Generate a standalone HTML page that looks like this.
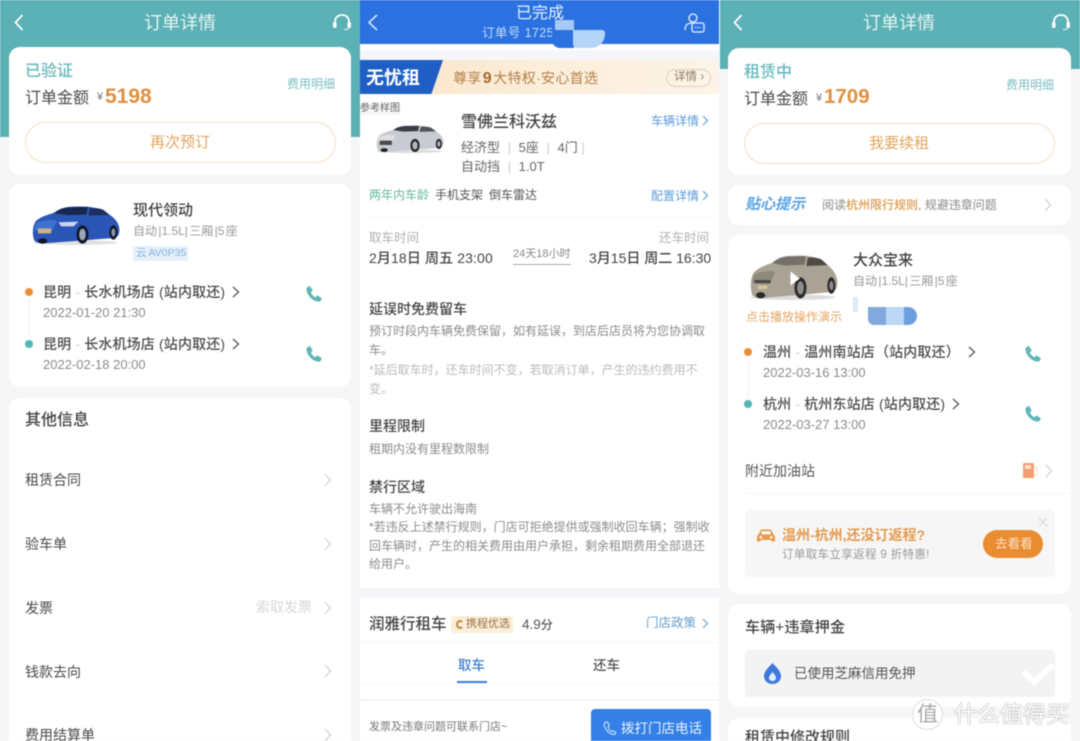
<!DOCTYPE html>
<html lang="zh"><head><meta charset="utf-8"><title>订单详情</title>
<style>
*{box-sizing:border-box;margin:0;padding:0}
html,body{width:1080px;height:741px;overflow:hidden;background:#f6f6f6}
body{position:relative;font-family:"Liberation Sans","Noto Sans CJK SC",sans-serif;color:#444}
#b{position:absolute;left:0;top:0;width:1080px;height:741px;filter:blur(.4px);overflow:hidden}
.a{position:absolute}
.t{position:absolute;white-space:nowrap;line-height:1}
.c{position:absolute;background:#fff;border-radius:11px}
.m{font-weight:500}
svg{position:absolute;overflow:visible}
.chev{fill:none;stroke:#d5d5d5;stroke-width:1.3}
.tl{color:#7dbdc2}
.or{color:#e08f3e}
.g{color:#8c8c8c}
.sp{word-spacing:-2px}
</style></head><body><div id="b">
<svg width="0" height="0" style="position:absolute"><defs>
<g id="ph"><path d="M1.5 3 L4.8 .8 L7.8 5.5 L5.9 7.5 C6.6 9.5 8.2 11.2 10.5 12.2 L12.5 10.4 L17 13.4 L15 16.6 C8 17.2 1 10 1.5 3Z" fill="#5fb6b8"/></g>
<g id="hs"><path d="M2 12 V9 C2 4.5 5 2 9 2 C13 2 16 4.5 16 9 V12" fill="none" stroke="#fff" stroke-width="1.8"/><rect x="0" y="9" width="3.5" height="6" rx="1.5" fill="#fff"/><rect x="14.5" y="9" width="3.5" height="6" rx="1.5" fill="#fff"/><path d="M16 15 C15 16.5 13 16.5 11 16.5" fill="none" stroke="#fff" stroke-width="1"/></g>
</defs></svg>

<!-- PANEL 1 -->
<div class="a" style="left:0;top:0;width:360px;height:741px;background:#f6f6f6"></div>
<div class="a" style="left:0;top:0;width:360px;height:137px;background:#5bb1b5"></div>
<svg style="left:14px;top:14px" width="10" height="17"><path d="M8.5 1 L1.5 8.5 L8.5 16" fill="none" stroke="#fff" stroke-width="1.7"/></svg>
<div class="t" style="left:144px;top:14px;font-size:18px;color:#e6f4f4">订单详情</div>
<svg style="left:333px;top:13px" width="18" height="18"><use href="#hs"/></svg>
<div class="c" style="left:9px;top:47px;width:342px;height:128px"></div>
<div class="t m" style="left:25px;top:64px;font-size:16px;color:#66b9bc">已验证</div>
<div class="t" style="left:25px;top:91px;font-size:16px;color:#4a4a4a">订单金额</div>
<div class="t" style="left:97px;top:92px;font-size:11px;color:#777">¥</div>
<div class="t" style="left:105px;top:86px;font-size:21px;font-weight:700;color:#e08f3e">5198</div>
<div class="t tl" style="left:287px;top:78px;font-size:12px">费用明细</div>
<div class="a" style="left:25px;top:122px;width:311px;height:41px;border:1px solid #f1dfc4;border-radius:21px"></div>
<div class="t" style="left:150px;top:135px;font-size:15px;color:#e2a45c">再次预订</div>

<div class="c" style="left:9px;top:184px;width:342px;height:203px"></div>
<svg style="left:32px;top:206px" width="88" height="39" viewBox="0 0 265 115" preserveAspectRatio="none"><ellipse cx="130" cy="108" rx="128" ry="7" fill="#e2e2e2"/><path d="M6 100 C0 80 2 58 12 44 C30 30 48 26 66 20 C80 10 98 2 125 2 C165 0 200 2 222 20 C245 30 262 48 263 68 C264 84 258 92 250 94 L175 100 L40 110 C20 110 10 108 6 100Z" fill="#2a55b5"/><path d="M68 21 C82 8 100 4 122 4 L168 3 L164 25 L108 27Z" fill="#16264f"/><path d="M174 7 C192 5 206 7 216 12 L234 26 L170 28Z" fill="#1c2f5e"/><path d="M12 50 C40 40 62 38 76 44 L60 74 L6 72Z" fill="#3b72cf"/><path d="M80 48 L140 46 L125 60 L88 60Z" fill="#c9d6ee"/><rect x="18" y="66" width="40" height="15" fill="#c9b18a"/><ellipse cx="152" cy="84" rx="18" ry="27" fill="#11172a"/><ellipse cx="152" cy="84" rx="10" ry="17" fill="#9aa5b8"/><ellipse cx="245" cy="78" rx="12" ry="21" fill="#11172a"/><ellipse cx="245" cy="78" rx="6" ry="12" fill="#8b96a8"/><ellipse cx="32" cy="103" rx="14" ry="8" fill="#11172a"/></svg>
<div class="t m" style="left:133px;top:203px;font-size:15px;color:#3f3f3f">现代领动</div>
<div class="t sp" style="left:133px;top:225px;font-size:12px;color:#999">自动 |1.5L| 三厢 |5 座</div>
<div class="a" style="left:133px;top:246px;width:55px;height:15px;background:#e6f0fb"></div>
<div class="t" style="left:136px;top:248px;font-size:10.5px;color:#85b1dc;word-spacing:-1px">云 AV0P35</div>
<div class="a" style="left:25px;top:288px;width:8px;height:8px;border-radius:50%;background:#ea8d34"></div>
<div class="a" style="left:29px;top:298px;width:1px;height:40px;background:#eee"></div>
<div class="a" style="left:25px;top:340px;width:8px;height:8px;border-radius:50%;background:#55b4b6"></div>
<div class="t m" style="left:43px;top:285px;font-size:14px;color:#4a4a4a;letter-spacing:.15px">昆明 <span style="color:#ccc">-</span> 长水机场店 (站内取还)</div>
<div class="t g" style="left:43px;top:306px;font-size:13px">2022-01-20 21:30</div>
<svg style="left:232px;top:286px" width="8" height="12"><path d="M1 1 L6.5 6 L1 11" fill="none" stroke="#555" stroke-width="1.3"/></svg>
<div class="t m" style="left:43px;top:337px;font-size:14px;color:#4a4a4a;letter-spacing:.15px">昆明 <span style="color:#ccc">-</span> 长水机场店 (站内取还)</div>
<div class="t g" style="left:43px;top:358px;font-size:13px">2022-02-18 20:00</div>
<svg style="left:232px;top:338px" width="8" height="12"><path d="M1 1 L6.5 6 L1 11" fill="none" stroke="#555" stroke-width="1.3"/></svg>
<svg style="left:305px;top:285px" width="18" height="18"><use href="#ph"/></svg>
<svg style="left:305px;top:345px" width="18" height="18"><use href="#ph"/></svg>

<div class="c" style="left:9px;top:398px;width:342px;height:360px"></div>
<div class="t m" style="left:25px;top:413px;font-size:16px;color:#444">其他信息</div>
<div class="t" style="left:25px;top:473px;font-size:14px;color:#4a4a4a">租赁合同</div>
<div class="t" style="left:25px;top:537px;font-size:14px;color:#4a4a4a">验车单</div>
<div class="t" style="left:25px;top:601px;font-size:14px;color:#4a4a4a">发票</div>
<div class="t" style="left:25px;top:665px;font-size:14px;color:#4a4a4a">钱款去向</div>
<div class="t" style="left:25px;top:728px;font-size:14px;color:#4a4a4a">费用结算单</div>
<div class="t" style="left:256px;top:600px;font-size:14px;color:#d8d8d8">索取发票</div>
<svg style="left:324px;top:474px" width="8" height="270"><path class="chev" d="M1 0 L6.5 6 L1 12 M1 64 L6.5 70 L1 76 M1 128 L6.5 134 L1 140 M1 191 L6.5 197 L1 203 M1 255 L6.5 261 L1 267"/></svg>

<!-- PANEL 2 -->
<div class="a" style="left:360px;top:0;width:360px;height:741px;background:#fff"></div>
<div class="a" style="left:360px;top:0;width:360px;height:44px;background:#2b72e0"></div>
<div class="a" style="left:360px;top:50px;width:360px;height:10px;background:#f5f6f9"></div>
<svg style="left:367px;top:14px" width="12" height="18"><path d="M10 1 L2 8.5 L10 16" fill="none" stroke="#e8f0fc" stroke-width="1.5"/></svg>
<div class="t" style="left:516px;top:6px;font-size:16px;color:#e8f1fd">已完成</div>
<div class="t" style="left:482px;top:27px;font-size:12.5px;color:#c5daf7;letter-spacing:.4px">订单号 1725</div>
<div class="a" style="left:552px;top:22px;width:22px;height:26px;background:#2b72e0;border-radius:0 0 0 8px"></div>
<div class="a" style="left:573px;top:30px;width:32px;height:18px;background:#b5d5f8;border-radius:0 3px 14px 4px"></div>
<div class="a" style="left:555px;top:20px;width:19px;height:10px;background:#a7c9f4"></div>
<svg style="left:684px;top:12px" width="21" height="21"><circle cx="9" cy="6" r="4" fill="none" stroke="#e8f0fc" stroke-width="1.3"/><path d="M1 18 C1 13 4 11 8 11" fill="none" stroke="#e8f0fc" stroke-width="1.3"/><rect x="8" y="11" width="12" height="9" rx="2" fill="none" stroke="#e8f0fc" stroke-width="1.3"/><path d="M11 15.5 H17" stroke="#e8f0fc" stroke-dasharray="1.5 1"/></svg>

<div class="a" style="left:360px;top:60px;width:360px;height:34px;background:linear-gradient(90deg,#f9e3c6,#fbeeda 50%,#fdf4e8)"></div>
<div class="a" style="left:360px;top:60px;width:83px;height:34px;background:#1f5ec4;clip-path:polygon(0 0,100% 0,86% 100%,0 100%)"></div>
<div class="t" style="left:366px;top:69px;font-size:18px;font-weight:700;color:#fff">无忧租</div>
<div class="t" style="left:453px;top:71px;font-size:14px;color:#b5814a;word-spacing:-3px;letter-spacing:.3px">尊享 <b style="font-size:16px;color:#a36a2c">9</b> 大特权·安心首选</div>
<div class="a" style="left:666px;top:69px;width:45px;height:18px;border:1px solid #ddd0bb;border-radius:9px"></div>
<div class="t" style="left:674px;top:72px;font-size:11.5px;color:#8b7760">详情 ›</div>

<div class="a" style="left:360px;top:105px;width:41px;height:10px;background:#f6f6f6"></div>
<div class="t" style="left:360px;top:104px;font-size:10px;color:#666">参考样图</div>
<svg style="left:376px;top:125px" width="68" height="28" viewBox="0 0 265 115" preserveAspectRatio="none"><ellipse cx="130" cy="108" rx="128" ry="7" fill="#ddd"/><path d="M6 100 C0 80 2 58 12 44 C30 30 48 26 66 20 C80 10 98 2 125 2 C165 0 200 2 222 20 C245 30 262 48 263 68 C264 84 258 92 250 94 L175 100 L40 110 C20 110 10 108 6 100Z" fill="#c9cbd2"/><path d="M68 21 C82 8 100 4 122 4 L168 3 L164 25 L108 27Z" fill="#3a3d45"/><path d="M174 7 C192 5 206 7 216 12 L234 26 L170 28Z" fill="#52555e"/><path d="M12 50 C40 40 62 38 76 44 L60 74 L6 72Z" fill="#dfe0e5"/><rect x="14" y="64" width="48" height="18" fill="#4a4c52"/><ellipse cx="152" cy="84" rx="18" ry="27" fill="#222328"/><ellipse cx="152" cy="84" rx="10" ry="17" fill="#b5b7bd"/><ellipse cx="245" cy="78" rx="12" ry="21" fill="#222328"/><ellipse cx="245" cy="78" rx="6" ry="12" fill="#b5b7bd"/><ellipse cx="32" cy="103" rx="14" ry="8" fill="#222328"/></svg>
<div class="t m" style="left:461px;top:115px;font-size:16px;color:#444">雪佛兰科沃兹</div>
<div class="t" style="left:651px;top:115px;font-size:12px;color:#5a9ad8">车辆详情</div>
<svg style="left:702px;top:115px" width="7" height="11"><path d="M1 1 L5.5 5.5 L1 10" fill="none" stroke="#5a9ad8" stroke-width="1.1"/></svg>
<div class="t" style="left:461px;top:141px;font-size:13px;color:#666">经济型 <span style="color:#ccc;margin:0 4px">|</span> 5座 <span style="color:#ccc;margin:0 4px">|</span> 4门 <span style="color:#ccc">|</span></div>
<div class="t" style="left:461px;top:160px;font-size:13px;color:#666">自动挡 <span style="color:#ccc;margin:0 4px">|</span> 1.0T</div>
<div class="t" style="left:369px;top:189px;font-size:12px;color:#62bb98">两年内车龄</div>
<div class="t" style="left:435px;top:189px;font-size:12px;color:#555">手机支架</div>
<div class="t" style="left:489px;top:189px;font-size:12px;color:#555">倒车雷达</div>
<div class="t" style="left:651px;top:190px;font-size:12px;color:#5a9ad8">配置详情</div>
<svg style="left:702px;top:190px" width="7" height="11"><path d="M1 1 L5.5 5.5 L1 10" fill="none" stroke="#5a9ad8" stroke-width="1.1"/></svg>
<div class="a" style="left:369px;top:217px;width:341px;height:1px;background:#f7f7f7"></div>
<div class="t" style="left:369px;top:232px;font-size:12.5px;color:#b0b0b0">取车时间</div>
<div class="t" style="left:659px;top:232px;font-size:12.5px;color:#b0b0b0">还车时间</div>
<div class="t m" style="left:369px;top:251px;font-size:14px;color:#444;letter-spacing:.12px">2月18日 周五 23:00</div>
<div class="t m" style="left:589px;top:251px;font-size:14px;color:#444">3月15日 周二 16:30</div>
<div class="t" style="left:513px;top:249px;font-size:11px;color:#888">24天18小时</div>
<div class="a" style="left:513px;top:264px;width:58px;height:1px;background:#aaa"></div>

<div class="t m" style="left:369px;top:302px;font-size:14px;color:#444">延误时免费留车</div>
<div class="t g" style="left:369px;top:325px;font-size:12px">预订时段内车辆免费保留，如有延误，到店后店员将为您协调取</div>
<div class="t g" style="left:369px;top:344px;font-size:12px">车。</div>
<div class="t" style="left:369px;top:364px;font-size:12px;color:#bbb">*延后取车时，还车时间不变，若取消订单，产生的违约费用不</div>
<div class="t" style="left:369px;top:383px;font-size:12px;color:#bbb">变。</div>
<div class="t m" style="left:369px;top:419px;font-size:14px;color:#444">里程限制</div>
<div class="t g" style="left:369px;top:443px;font-size:12px">租期内没有里程数限制</div>
<div class="t m" style="left:369px;top:480px;font-size:14px;color:#444">禁行区域</div>
<div class="t g" style="left:369px;top:503px;font-size:12px">车辆不允许驶出海南</div>
<div class="t g" style="left:369px;top:521px;font-size:12px">*若违反上述禁行规则，门店可拒绝提供或强制收回车辆；强制收</div>
<div class="t g" style="left:369px;top:540px;font-size:12px">回车辆时，产生的相关费用由用户承担，剩余租期费用全部退还</div>
<div class="t g" style="left:369px;top:558px;font-size:12px">给用户。</div>

<div class="a" style="left:360px;top:588px;width:360px;height:10px;background:#f5f6f9"></div>
<div class="t m" style="left:369px;top:617px;font-size:15.5px;color:#444">润雅行租车</div>
<div class="a" style="left:451px;top:616px;width:62px;height:17px;background:#fbeeda;border-radius:3px"></div>
<div class="a" style="left:456px;top:620px;width:8px;height:9px;border-radius:50%;border:2px solid #c08a3c;border-right-color:transparent"></div>
<div class="t" style="left:466px;top:619px;font-size:11px;color:#9a7444">携程优选</div>
<div class="t m" style="left:522px;top:618px;font-size:13.5px;color:#555">4.9<span style="font-size:12px">分</span></div>
<div class="t" style="left:646px;top:617px;font-size:12.5px;color:#6a9fc8">门店政策</div>
<svg style="left:702px;top:618px" width="7" height="11"><path d="M1 1 L5.5 5.5 L1 10" fill="none" stroke="#6a9fc8" stroke-width="1.1"/></svg>
<div class="a" style="left:360px;top:642px;width:360px;height:1px;background:#f7f7f7"></div>
<div class="t m" style="left:458px;top:659px;font-size:13.5px;color:#3f80d0">取车</div>
<div class="t m" style="left:593px;top:659px;font-size:13.5px;color:#555">还车</div>
<div class="a" style="left:457px;top:681px;width:30px;height:2px;background:#3c83dc"></div>
<div class="a" style="left:360px;top:683px;width:360px;height:1px;background:#f7f7f7"></div>
<div class="a" style="left:360px;top:699px;width:360px;height:2px;background:#f6f6f8"></div>
<div class="t" style="left:369px;top:722px;font-size:11px;color:#777">发票及违章问题可联系门店~</div>
<div class="a" style="left:591px;top:709px;width:120px;height:40px;background:#3480e6;border-radius:4px"></div>
<svg style="left:603px;top:721px" width="14" height="14" viewBox="0 0 18 18"><path d="M3 1.5 C1 3 1 6 3.5 10 C6 14.5 10 17 14 17.5 C15.5 17.5 16.5 16 16.5 15 L13 12.5 L11 13.5 C9 13 7 10 6.5 7.5 L8 6 L6 1.5 Z" fill="none" stroke="#dce9fb" stroke-width="1.3"/></svg>
<div class="t" style="left:621px;top:722px;font-size:13.5px;color:#e8f1fd">拨打门店电话</div>
<div class="a" style="left:719px;top:0;width:1px;height:741px;background:#f7f7f7"></div>

<!-- PANEL 3 -->
<div class="a" style="left:720px;top:0;width:360px;height:741px;background:#f6f6f6"></div>
<div class="a" style="left:720px;top:0;width:360px;height:69px;background:#5bb1b5"></div>
<svg style="left:733px;top:14px" width="10" height="17"><path d="M8.5 1 L1.5 8.5 L8.5 16" fill="none" stroke="#fff" stroke-width="1.7"/></svg>
<div class="t" style="left:863px;top:14px;font-size:18px;color:#e6f4f4">订单详情</div>
<svg style="left:1052px;top:13px" width="18" height="18"><use href="#hs"/></svg>
<div class="c" style="left:728px;top:48px;width:343px;height:127px"></div>
<div class="t m" style="left:744px;top:65px;font-size:16px;color:#66b9bc">租赁中</div>
<div class="t" style="left:744px;top:92px;font-size:16px;color:#4a4a4a">订单金额</div>
<div class="t" style="left:816px;top:93px;font-size:11px;color:#777">¥</div>
<div class="t" style="left:824px;top:87px;font-size:20.5px;font-weight:700;color:#e08f3e">1709</div>
<div class="t tl" style="left:1006px;top:79px;font-size:12px">费用明细</div>
<div class="a" style="left:744px;top:123px;width:311px;height:41px;border:1px solid #f1dfc4;border-radius:21px"></div>
<div class="t" style="left:869px;top:136px;font-size:15px;color:#e2a45c">我要续租</div>

<div class="c" style="left:728px;top:185px;width:343px;height:40px"></div>
<div class="t" style="left:745px;top:197px;font-size:15px;font-weight:700;font-style:italic;color:#5aa3e4">贴心提示</div>
<div class="t" style="left:822px;top:199px;font-size:12px;color:#888">阅读<span style="color:#d99a4e;font-weight:500">杭州限行规则</span>, 规避违章问题</div>
<svg style="left:1044px;top:199px" width="8" height="13"><path class="chev" d="M1 0 L6.5 6 L1 12"/></svg>

<div class="c" style="left:728px;top:235px;width:343px;height:359px"></div>
<svg style="left:750px;top:255px" width="88" height="45" viewBox="0 0 265 115" preserveAspectRatio="none"><ellipse cx="130" cy="108" rx="128" ry="7" fill="#ddd"/><path d="M6 100 C0 80 2 58 12 44 C30 30 48 26 66 20 C80 10 98 2 125 2 C165 0 200 2 222 20 C245 30 262 48 263 68 C264 84 258 92 250 94 L175 100 L40 110 C20 110 10 108 6 100Z" fill="#aaa294"/><path d="M68 21 C82 8 100 4 122 4 L168 3 L164 25 L108 27Z" fill="#75716a"/><path d="M174 7 C192 5 206 7 216 12 L234 26 L170 28Z" fill="#4e4b46"/><path d="M12 50 C40 40 62 38 76 44 L60 74 L6 72Z" fill="#8f897c"/><rect x="14" y="64" width="48" height="8" fill="#4a4843"/><rect x="24" y="78" width="28" height="9" fill="#d7c892"/><ellipse cx="152" cy="84" rx="18" ry="27" fill="#2a2a2a"/><ellipse cx="152" cy="84" rx="10" ry="17" fill="#8d8d8d"/><ellipse cx="245" cy="78" rx="12" ry="21" fill="#2a2a2a"/><ellipse cx="245" cy="78" rx="6" ry="12" fill="#8d8d8d"/><ellipse cx="32" cy="103" rx="14" ry="8" fill="#2a2a2a"/><path d="M122 42 L122 78 L150 60Z" fill="#fff"/></svg>
<div class="t m" style="left:853px;top:253px;font-size:15px;color:#3f3f3f">大众宝来</div>
<div class="t sp" style="left:853px;top:275px;font-size:12px;color:#999">自动 |1.5L| 三厢 |5 座</div>
<div class="t" style="left:746px;top:311px;font-size:12px;color:#e3a766">点击播放操作演示</div>
<div class="a" style="left:853px;top:297px;width:5px;height:15px;background:#dce9f8"></div>
<div class="a" style="left:868px;top:307px;width:18px;height:18px;background:#82a9de;border-radius:0 0 0 6px"></div>
<div class="a" style="left:886px;top:307px;width:18px;height:18px;background:#bcd6f5"></div>
<div class="a" style="left:904px;top:307px;width:13px;height:18px;background:#6d9fe0;border-radius:0 9px 9px 0"></div>

<div class="a" style="left:744px;top:348px;width:8px;height:8px;border-radius:50%;background:#ea8d34"></div>
<div class="a" style="left:748px;top:358px;width:1px;height:40px;background:#eee"></div>
<div class="a" style="left:744px;top:400px;width:8px;height:8px;border-radius:50%;background:#55b4b6"></div>
<div class="t m" style="left:763px;top:345px;font-size:14px;color:#4a4a4a;letter-spacing:.15px">温州 <span style="color:#ccc">-</span> 温州南站店（站内取还）</div>
<div class="t g" style="left:763px;top:366px;font-size:13px">2022-03-16 13:00</div>
<svg style="left:968px;top:346px" width="8" height="12"><path d="M1 1 L6.5 6 L1 11" fill="none" stroke="#555" stroke-width="1.3"/></svg>
<div class="t m" style="left:763px;top:397px;font-size:14px;color:#4a4a4a;letter-spacing:.15px">杭州 <span style="color:#ccc">-</span> 杭州东站店 (站内取还)</div>
<div class="t g" style="left:763px;top:418px;font-size:13px">2022-03-27 13:00</div>
<svg style="left:952px;top:398px" width="8" height="12"><path d="M1 1 L6.5 6 L1 11" fill="none" stroke="#555" stroke-width="1.3"/></svg>
<svg style="left:1024px;top:345px" width="18" height="18"><use href="#ph"/></svg>
<svg style="left:1024px;top:405px" width="18" height="18"><use href="#ph"/></svg>
<div class="t" style="left:745px;top:464px;font-size:14px;color:#555">附近加油站</div>
<div class="a" style="left:1023px;top:463px;width:11px;height:15px;background:#f0a070;border-radius:2px 2px 0 0"></div>
<div class="a" style="left:1025px;top:465px;width:6px;height:4px;background:#fde0cc"></div>
<div class="a" style="left:1034px;top:466px;width:3px;height:10px;border:1px solid #f2dcb5;border-left:none;border-radius:0 2px 2px 0"></div>
<svg style="left:1045px;top:465px" width="8" height="13"><path class="chev" d="M1 0 L6.5 6 L1 12"/></svg>
<div class="a" style="left:745px;top:493px;width:326px;height:1px;background:#f7f7f7"></div>

<div class="a" style="left:745px;top:510px;width:310px;height:67px;background:#f6f6f6;border-radius:5px"></div>
<svg style="left:757px;top:528px" width="18" height="15" viewBox="0 0 18 15"><path d="M4 1.5 H14 L16.5 6.5 C17.5 7 18 8 18 9 V13.5 H14.5 V12 H3.5 V13.5 H0 V9 C0 8 .5 7 1.5 6.5Z" fill="#ea9a48"/><rect x="4.5" y="3.2" width="9" height="3.2" fill="#f6f6f6"/><circle cx="3.8" cy="9.2" r="1.3" fill="#f6f6f6"/><circle cx="14.2" cy="9.2" r="1.3" fill="#f6f6f6"/></svg>
<div class="t" style="left:782px;top:528px;font-size:14px;font-weight:700;color:#e49b50">温州-杭州,还没订返程?</div>
<div class="t" style="left:782px;top:550px;font-size:11.5px;color:#999;letter-spacing:.35px">订单取车立享返程 9 折特惠!</div>
<div class="a" style="left:983px;top:530px;width:60px;height:28px;background:#ea8c30;border-radius:14px"></div>
<div class="t" style="left:995px;top:538px;font-size:12.5px;color:#fbe3c9">去看看</div>
<svg style="left:1038px;top:517px" width="10" height="10"><path d="M1 1 L9 9 M9 1 L1 9" stroke="#ddd" stroke-width="1.3"/></svg>

<div class="c" style="left:728px;top:604px;width:343px;height:103px"></div>
<div class="t m" style="left:745px;top:620px;font-size:15px;color:#444;letter-spacing:.2px">车辆+违章押金</div>
<div class="a" style="left:745px;top:650px;width:310px;height:47px;background:#f3f3f3;border-radius:4px"></div>
<svg style="left:764px;top:663px" width="17" height="21" viewBox="0 0 17 21"><path d="M8.5 0 C12 4 17 8 17 13 C17 18 13 21 8.5 21 C4 21 0 18 0 13 C0 8 5 4 8.5 0Z" fill="#3f79e0"/><path d="M8.5 9 C10 11 12 13 12 15 C12 17 10 18 8.5 18 C7 18 5 17 5 15 C5 13 7 11 8.5 9Z" fill="#e4eefc"/></svg>
<div class="t" style="left:794px;top:667px;font-size:13.5px;color:#555">已使用芝麻信用免押</div>
<svg style="left:1020px;top:660px" width="36" height="28"><path d="M3 12 L14 22 L33 5" fill="none" stroke="#fff" stroke-width="6"/></svg>

<div class="c" style="left:728px;top:718px;width:343px;height:40px"></div>
<div class="t m" style="left:745px;top:730px;font-size:15px;color:#444">租赁中修改规则</div>

<div class="a" style="left:912px;top:699px;width:31px;height:31px;border-radius:50%;background:rgba(255,255,255,.85);border:1px solid #ddd"></div>
<div class="t" style="left:917px;top:704px;font-size:21px;color:#aaa">值</div>
<div class="t" style="left:954px;top:703px;font-size:23px;color:#fff;text-shadow:0 0 1px #888,0 0 1px #888">什么值得买</div>
</div></body></html>
